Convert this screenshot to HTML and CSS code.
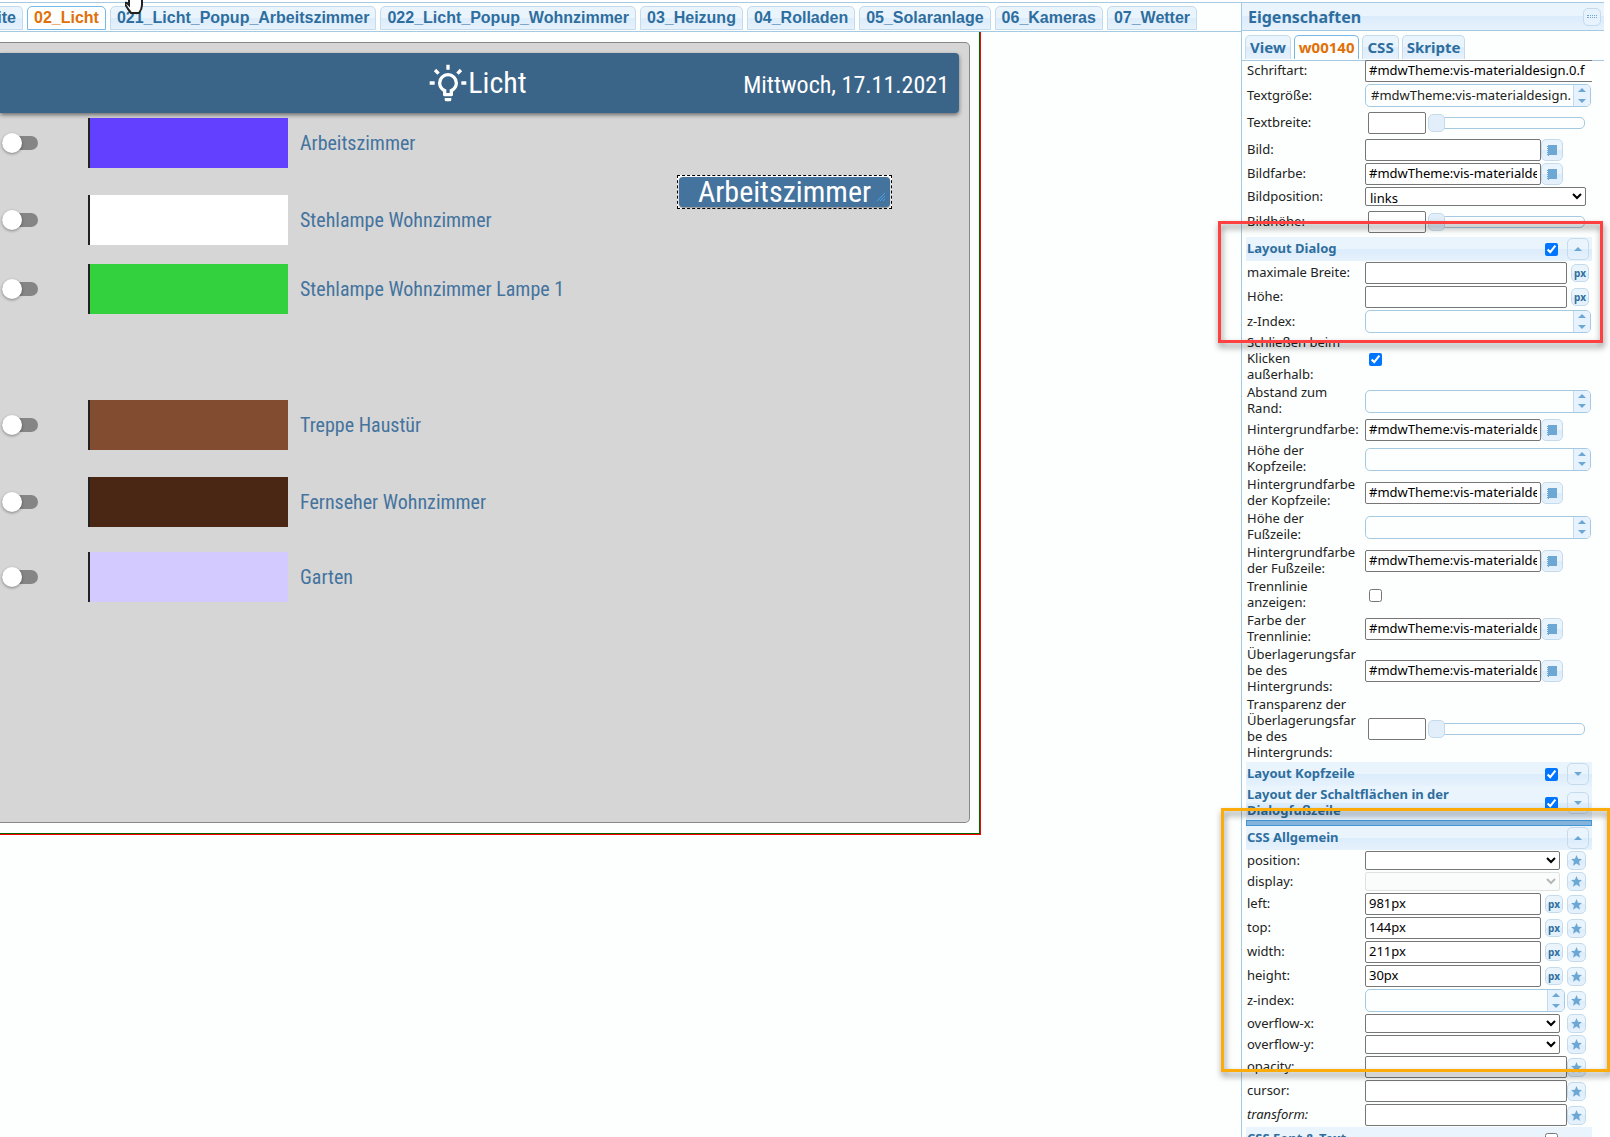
FILE: index.html
```html
<!DOCTYPE html>
<html lang="de">
<head>
<meta charset="utf-8">
<title>vis Editor</title>
<link rel="stylesheet" href="styles.css">
</head>
<body>
<svg class="defs" width="0" height="0" aria-hidden="true">
  <symbol id="up" viewBox="0 0 8 4"><path d="M0 4 4 0 8 4z"/></symbol>
  <symbol id="down" viewBox="0 0 8 4"><path d="M0 0H8L4 4z"/></symbol>
  <symbol id="book" viewBox="0 0 10 11"><path d="M2 0h8v10H2zM0 1h1v1H0zM0 3h1v1H0zM0 5h1v1H0zM0 7h1v1H0zM0 9h1v1H0zM1 0h1v11H1z"/></symbol>
  <symbol id="star" viewBox="0 0 12 12"><path d="M6 0 7.7 4 12 4.4 8.8 7.2 9.8 11.6 6 9.3 2.2 11.6 3.2 7.2 0 4.4 4.3 4z"/></symbol>
</svg>
<div class="app">
  <main class="editor">
    <nav class="views">
      <a href="#" class="view-tab cut">ite</a>
      <a href="#" class="view-tab active">02_Licht</a>
      <a href="#" class="view-tab">021_Licht_Popup_Arbeitszimmer</a>
      <a href="#" class="view-tab">022_Licht_Popup_Wohnzimmer</a>
      <a href="#" class="view-tab">03_Heizung</a>
      <a href="#" class="view-tab">04_Rolladen</a>
      <a href="#" class="view-tab">05_Solaranlage</a>
      <a href="#" class="view-tab">06_Kameras</a>
      <a href="#" class="view-tab">07_Wetter</a>
    </nav>
    <div class="canvas">
      <section class="card">
        <header class="title-bar">
          <h1 class="title"><svg class="bulb" viewBox="0 0 24 24"><path d="M20,11H23V13H20V11M1,11H4V13H1V11M13,1V4H11V1H13M4.92,3.5L7.05,5.64L5.63,7.05L3.5,4.93L4.92,3.5M16.95,5.63L19.07,3.5L20.5,4.93L18.37,7.05L16.95,5.63M12,6A6,6 0 0,1 18,12C18,14.22 16.79,16.16 15,17.2V19A1,1 0 0,1 14,20H10A1,1 0 0,1 9,19V17.2C7.21,16.16 6,14.22 6,12A6,6 0 0,1 12,6M14,21V22A1,1 0 0,1 13,23H11A1,1 0 0,1 10,22V21H14M11,18H13V15.87C14.73,15.43 16,13.86 16,12A4,4 0 0,0 12,8A4,4 0 0,0 8,12C8,13.86 9.27,15.43 11,15.87V18Z"/></svg>Licht</h1>
          <span class="date">Mittwoch, 17.11.2021</span>
        </header>
        <div class="lamps">
          <div class="lamp"><input type="checkbox" class="switch" id="l1"><span class="swatch violet"></span><label for="l1">Arbeitszimmer</label></div>
          <div class="lamp"><input type="checkbox" class="switch" id="l2"><span class="swatch white"></span><label for="l2">Stehlampe Wohnzimmer</label></div>
          <div class="lamp"><input type="checkbox" class="switch" id="l3"><span class="swatch green"></span><label for="l3">Stehlampe Wohnzimmer Lampe 1</label></div>
          <div class="lamp"><input type="checkbox" class="switch" id="l4"><span class="swatch brown"></span><label for="l4">Treppe Haustür</label></div>
          <div class="lamp"><input type="checkbox" class="switch" id="l5"><span class="swatch dark"></span><label for="l5">Fernseher Wohnzimmer</label></div>
          <div class="lamp"><input type="checkbox" class="switch" id="l6"><span class="swatch lilac"></span><label for="l6">Garten</label></div>
        </div>
      </section>
      <div class="selected">
        <button class="widget">Arbeitszimmer</button>
        <svg class="grip" viewBox="0 0 8 8"><path d="M0 8 8 0M3 8 8 3M6 8 8 6"/></svg>
      </div>
    </div>
    <svg class="pointer" viewBox="0 0 20 14"><path d="M4 -2V5L2 3Q0 2 0 4L3 9Q5 11 6 13H14Q17 9 17 5V-2z"/></svg>
  </main>

  <aside class="panel">
    <header class="panel-head"><h2>Eigenschaften</h2><button class="mini" aria-label="Minimieren"><span></span></button></header>
    <nav class="panel-tabs">
      <a href="#">View</a><a href="#" class="active">w00140</a><a href="#">CSS</a><a href="#">Skripte</a>
    </nav>
    <form class="props">
      <div class="row"><label for="p1">Schriftart:</label><input id="p1" class="text open" value="#mdwTheme:vis-materialdesign.0.f"></div>
      <div class="row"><label for="p2">Textgröße:</label><span class="spin"><input id="p2" value="#mdwTheme:vis-materialdesign."><span class="arrows"><svg><use href="#up"/></svg><svg><use href="#down"/></svg></span></span></div>
      <div class="row tall"><label for="p3">Textbreite:</label><input id="p3" class="text small"><input type="range" class="slider" value="0" aria-label="Textbreite"></div>
      <div class="row"><label for="p4">Bild:</label><input id="p4" class="text mid"><button type="button" class="btn" aria-label="Bild wählen"><svg class="book"><use href="#book"/></svg></button></div>
      <div class="row"><label for="p5">Bildfarbe:</label><input id="p5" class="text mid" value="#mdwTheme:vis-materialdesign"><button type="button" class="btn" aria-label="Farbe wählen"><svg class="book"><use href="#book"/></svg></button></div>
      <div class="row"><label for="p6">Bildposition:</label><select id="p6" class="wide"><option>links</option></select></div>
      <div class="row tall"><label for="p7">Bildhöhe:</label><input id="p7" class="text small"><input type="range" class="slider" value="0" aria-label="Bildhöhe"></div>
      <div class="group"><label for="g1">Layout Dialog</label><input type="checkbox" id="g1" checked><button type="button" class="btn" aria-label="Einklappen"><svg class="tri"><use href="#up"/></svg></button></div>
      <div class="row"><label for="p8">maximale Breite:</label><input id="p8" class="text long"><button type="button" class="px">px</button></div>
      <div class="row"><label for="p9">Höhe:</label><input id="p9" class="text long"><button type="button" class="px">px</button></div>
      <div class="row"><label for="p10">z-Index:</label><span class="spin"><input id="p10"><span class="arrows"><svg><use href="#up"/></svg><svg><use href="#down"/></svg></span></span></div>
      <div class="row"><label for="p11">Schließen beim<br>Klicken<br>außerhalb:</label><input type="checkbox" id="p11" class="tick" checked></div>
      <div class="row"><label for="p12">Abstand zum<br>Rand:</label><span class="spin"><input id="p12"><span class="arrows"><svg><use href="#up"/></svg><svg><use href="#down"/></svg></span></span></div>
      <div class="row"><label for="p13">Hintergrundfarbe:</label><input id="p13" class="text mid" value="#mdwTheme:vis-materialdesign"><button type="button" class="btn" aria-label="Farbe wählen"><svg class="book"><use href="#book"/></svg></button></div>
      <div class="row"><label for="p14">Höhe der<br>Kopfzeile:</label><span class="spin"><input id="p14"><span class="arrows"><svg><use href="#up"/></svg><svg><use href="#down"/></svg></span></span></div>
      <div class="row"><label for="p15">Hintergrundfarbe<br>der Kopfzeile:</label><input id="p15" class="text mid" value="#mdwTheme:vis-materialdesign"><button type="button" class="btn" aria-label="Farbe wählen"><svg class="book"><use href="#book"/></svg></button></div>
      <div class="row"><label for="p16">Höhe der<br>Fußzeile:</label><span class="spin"><input id="p16"><span class="arrows"><svg><use href="#up"/></svg><svg><use href="#down"/></svg></span></span></div>
      <div class="row"><label for="p17">Hintergrundfarbe<br>der Fußzeile:</label><input id="p17" class="text mid" value="#mdwTheme:vis-materialdesign"><button type="button" class="btn" aria-label="Farbe wählen"><svg class="book"><use href="#book"/></svg></button></div>
      <div class="row"><label for="p18">Trennlinie<br>anzeigen:</label><input type="checkbox" id="p18" class="tick"></div>
      <div class="row"><label for="p19">Farbe der<br>Trennlinie:</label><input id="p19" class="text mid" value="#mdwTheme:vis-materialdesign"><button type="button" class="btn" aria-label="Farbe wählen"><svg class="book"><use href="#book"/></svg></button></div>
      <div class="row"><label for="p20">Überlagerungsfar<br>be des<br>Hintergrunds:</label><input id="p20" class="text mid" value="#mdwTheme:vis-materialdesign"><button type="button" class="btn" aria-label="Farbe wählen"><svg class="book"><use href="#book"/></svg></button></div>
      <div class="row"><label for="p21">Transparenz der<br>Überlagerungsfar<br>be des<br>Hintergrunds:</label><input id="p21" class="text small"><input type="range" class="slider" value="0" aria-label="Transparenz"></div>
      <div class="group"><label for="g2">Layout Kopfzeile</label><input type="checkbox" id="g2" checked><button type="button" class="btn" aria-label="Ausklappen"><svg class="tri"><use href="#down"/></svg></button></div>
      <div class="group"><label for="g3">Layout der Schaltflächen in der<br>Dialogfußzeile</label><input type="checkbox" id="g3" checked><button type="button" class="btn" aria-label="Ausklappen"><svg class="tri"><use href="#down"/></svg></button></div>
      <div class="divider"></div>
      <div class="group"><span class="name">CSS Allgemein</span><button type="button" class="btn" aria-label="Einklappen"><svg class="tri"><use href="#up"/></svg></button></div>
      <div class="row"><label for="c1">position:</label><select id="c1"><option></option></select><button type="button" class="fav" aria-label="Favorit"><svg class="star"><use href="#star"/></svg></button></div>
      <div class="row"><label for="c2">display:</label><select id="c2" disabled><option></option></select><button type="button" class="fav" aria-label="Favorit"><svg class="star"><use href="#star"/></svg></button></div>
      <div class="row"><label for="c3">left:</label><input id="c3" class="text mid" value="981px"><button type="button" class="px">px</button><button type="button" class="fav" aria-label="Favorit"><svg class="star"><use href="#star"/></svg></button></div>
      <div class="row"><label for="c4">top:</label><input id="c4" class="text mid" value="144px"><button type="button" class="px">px</button><button type="button" class="fav" aria-label="Favorit"><svg class="star"><use href="#star"/></svg></button></div>
      <div class="row"><label for="c5">width:</label><input id="c5" class="text mid" value="211px"><button type="button" class="px">px</button><button type="button" class="fav" aria-label="Favorit"><svg class="star"><use href="#star"/></svg></button></div>
      <div class="row"><label for="c6">height:</label><input id="c6" class="text mid" value="30px"><button type="button" class="px">px</button><button type="button" class="fav" aria-label="Favorit"><svg class="star"><use href="#star"/></svg></button></div>
      <div class="row"><label for="c7">z-index:</label><span class="spin short"><input id="c7"><span class="arrows"><svg><use href="#up"/></svg><svg><use href="#down"/></svg></span></span><button type="button" class="fav" aria-label="Favorit"><svg class="star"><use href="#star"/></svg></button></div>
      <div class="row"><label for="c8">overflow-x:</label><select id="c8"><option></option></select><button type="button" class="fav" aria-label="Favorit"><svg class="star"><use href="#star"/></svg></button></div>
      <div class="row"><label for="c9">overflow-y:</label><select id="c9"><option></option></select><button type="button" class="fav" aria-label="Favorit"><svg class="star"><use href="#star"/></svg></button></div>
      <div class="row"><label for="c10">opacity:</label><input id="c10" class="text long"><button type="button" class="fav" aria-label="Favorit"><svg class="star"><use href="#star"/></svg></button></div>
      <div class="row"><label for="c11">cursor:</label><input id="c11" class="text long"><button type="button" class="fav" aria-label="Favorit"><svg class="star"><use href="#star"/></svg></button></div>
      <div class="row"><label for="c12"><em>transform:</em></label><input id="c12" class="text long"><button type="button" class="fav" aria-label="Favorit"><svg class="star"><use href="#star"/></svg></button></div>
      <div class="group"><label for="g4">CSS Font &amp; Text</label><input type="checkbox" id="g4"><span class="blank"></span></div>
    </form>
    <div class="mark red"></div>
    <div class="mark orange"></div>
  </aside>
</div>
</body>
</html>
```

FILE: styles.css
```css
* { box-sizing: border-box; }

body {
  margin: 0;
  background: #fff;
  font: 13px/16px "Lucida Grande", "Lucida Sans", "Noto Sans", sans-serif;
  color: #222;
}

a { text-decoration: none; color: inherit; }
h1, h2 { margin: 0; font-weight: 400; }
button, input, select { margin: 0; font: inherit; }
svg { display: block; fill: #6da8d5; }
.defs { position: absolute; }

.app {
  display: flex;
  height: 100vh;
  padding-top: 2px;
  overflow: hidden;
}

/* Editor */
.editor {
  flex: 1;
  min-width: 0;
  position: relative;
  display: flex;
  flex-direction: column;
  background: #fcfffe;
  border-top: 1px solid #a6c9e2;
}

.views {
  display: flex;
  gap: 4px;
  height: 29px;
  padding-top: 3px;
  background: #fcfffe;
  border-bottom: 1px solid #a6c9e2;
  overflow: hidden;
}

.view-tab {
  height: 24px;
  padding: 0 6px;
  border: 1px solid #c5dbec;
  border-radius: 5px 5px 0 0;
  background: linear-gradient(#eaf4fd 50%, #dcecfb 50%, #e6f2fd);
  color: #2e6e9e;
  font: bold 16px/21px "Liberation Sans", Arial, sans-serif;
  white-space: nowrap;
}
.view-tab.cut {
  display: flex;
  justify-content: flex-end;
  width: 23px;
  padding-left: 0;
  border-left: 0;
  border-top-left-radius: 0;
}
.view-tab.active { background: #fcfffe; border-color: #79b7e7; color: #e17009; }

.canvas {
  position: relative;
  width: min(981px, 100%);
  height: 803px;
  padding: 10px 10px 10px 0;
  border: 1px solid #f00;
  border-width: 0 1px 1px 0;
  box-shadow: inset -1px -1px #006400;
  font-family: "Roboto Condensed", "Liberation Sans Narrow", Roboto, sans-serif;
}

.card {
  height: 781px;
  padding: 10px 10px 0 0;
  background: #d6d6d6;
  border: 1px solid #888;
  border-left: 0;
  border-radius: 0 5px 5px 0;
}

.title-bar {
  display: grid;
  grid-template-columns: 1fr auto 1fr;
  align-items: center;
  height: 60px;
  padding: 0 10px 0 6px;
  background: #3b6588;
  border-radius: 0 4px 4px 0;
  box-shadow: 0 2px 4px rgba(0, 0, 0, .5);
  color: #fff;
}
.title { grid-column: 2; display: flex; align-items: center; font-size: 30px; line-height: 32px; }
.bulb { width: 40px; height: 40px; fill: #fff; }
.date { justify-self: end; padding-top: 4px; font-size: 24px; line-height: 32px; }

.lamps {
  display: grid;
  grid-template-rows: 77px 69px 136px 77px 75px 50px;
  margin-top: 5px;
}
.lamp {
  display: flex;
  align-items: center;
  height: 50px;
  padding-left: 2px;
  color: #44739e;
  font-size: 20px;
  line-height: 24px;
}
.switch {
  appearance: none;
  position: relative;
  width: 36px;
  height: 14px;
  border-radius: 7px;
  background: #858585;
}
.switch::before {
  content: "";
  position: absolute;
  left: 0;
  top: -3px;
  width: 20px;
  height: 20px;
  border-radius: 50%;
  background: #fff;
  box-shadow: 0 1px 3px rgba(0, 0, 0, .4);
}
.swatch { width: 200px; height: 50px; margin: 0 12px 0 50px; border-left: 2px solid #222; }
.violet { background: #633fff; }
.white { background: #fff; }
.green { background: #34d13e; }
.brown { background: #824c31; }
.dark { background: #4a2614; }
.lilac { background: #d3caff; }

.selected {
  position: absolute;
  left: 677px;
  top: 143px;
  width: 215px;
  height: 34px;
  padding: 1px;
  border: 1px dashed #000;
  background: #fff;
}
.widget {
  display: block;
  width: 100%;
  height: 30px;
  padding: 0;
  border: 0;
  border-radius: 4px;
  background: #44739e;
  box-shadow: 0 1px 2px rgba(0, 0, 0, .5);
  color: #fff;
  font-size: 30px;
  line-height: 28px;
}
.grip { position: absolute; right: 6px; bottom: 7px; width: 8px; height: 8px; stroke: #4a9fe6; fill: none; }
.pointer { position: absolute; left: 125px; top: -3px; width: 20px; height: 14px; fill: #fff; stroke: #222; stroke-width: 2px; }

/* Property panel */
.panel {
  position: relative;
  width: 369px;
  display: flex;
  flex-direction: column;
  border-right: 6px solid #fff;
  background: #fcfffe;
}
.panel::before {
  content: "";
  position: absolute;
  inset: 0 auto 0 0;
  width: 1px;
  background: #a6c9e2;
}
.panel-head {
  display: flex;
  align-items: center;
  justify-content: space-between;
  height: 29px;
  padding: 0 3px 0 6px;
  border: 1px solid #a6c9e2;
  border-right: 0;
  background: linear-gradient(#eaf4fd 50%, #dcecfb 50%, #e6f2fd);
}
.panel-head h2 { font-size: 16px; line-height: 20px; font-weight: 700; color: #2e6e9e; }
.mini {
  display: grid;
  place-items: center;
  width: 18px;
  height: 18px;
  padding: 0;
  border: 1px solid #c5dbec;
  border-radius: 5px;
  background: #e6f2fd;
}
.mini span { width: 10px; height: 3px; border: 1px dotted #6da8d5; border-width: 1px 0; }

.panel-tabs {
  display: flex;
  gap: 3px;
  height: 30px;
  padding: 4px 4px 0;
  border-bottom: 1px solid #a6c9e2;
}
.panel-tabs a {
  height: 24px;
  padding: 0 4px;
  border: 1px solid #c5dbec;
  border-bottom: 0;
  border-radius: 5px 5px 0 0;
  background: linear-gradient(#eaf4fd 50%, #dcecfb 50%, #e6f2fd);
  color: #2e6e9e;
  font-size: 15px;
  line-height: 22px;
  font-weight: 700;
}
.panel-tabs .active { background: #fcfffe; border-color: #79b7e7; color: #e17009; }

.props {
  flex: 1;
  min-height: 0;
  display: flex;
  flex-direction: column;
  gap: 2px;
  margin-top: -1px;
  padding: 0 12px 0 5px;
  overflow: hidden;
}
.row, .group { display: flex; align-items: center; flex: none; }
.row > label { width: 119px; margin: -1px 0 1px; padding-left: 1px; white-space: nowrap; }
.row.tall { height: 28px; }

.text {
  height: 22px;
  padding: 0 3px 2px;
  border: 1px solid #767676;
  border-radius: 2px;
  background: #fff;
  color: #000;
}
.open { width: 227px; border-right: 0; border-radius: 2px 0 0 2px; }
.long { width: 202px; }
.mid { width: 176px; }
.small { width: 58px; margin-left: 3px; }

.spin {
  display: flex;
  width: 226px;
  height: 23px;
  border: 1px solid #a6c9e2;
  border-radius: 5px;
  background: #fcfffe;
  overflow: hidden;
}
.spin.short { width: 200px; }
.spin input { flex: 1; min-width: 0; padding: 0 0 2px 5px; border: 0; background: none; color: #222; }
.arrows {
  display: flex;
  flex-direction: column;
  align-items: center;
  justify-content: space-around;
  width: 17px;
  border-left: 1px solid #c5dbec;
  background: #e6f2fd;
}
.arrows svg, .tri { width: 8px; height: 4px; }

.slider {
  appearance: none;
  width: 157px;
  height: 18px;
  margin-left: 2px;
  background: none;
}
.slider::-webkit-slider-runnable-track { height: 12px; border: 1px solid #a6c9e2; border-radius: 5px; background: #fcfffe; }
.slider::-webkit-slider-thumb {
  appearance: none;
  width: 17px;
  height: 18px;
  margin: -4px 0 0 -1px;
  border: 1px solid #c5dbec;
  border-radius: 5px;
  background: #e2effb;
}

select {
  width: 195px;
  height: 19px;
  border: 1px solid #767676;
  border-radius: 2px;
  background: #fff;
  color: #000;
  line-height: 15px;
}
select.wide { width: 221px; padding-bottom: 2px; }
select:disabled { border-color: #d5d5d5; background: #f9fbfa; color: #999; }

.btn, .fav, .px {
  display: grid;
  place-items: center;
  flex: none;
  padding: 0;
  border: 1px solid #c5dbec;
  border-radius: 5px;
  background: linear-gradient(#eaf4fd 50%, #dcecfb 50%, #e6f2fd);
}
.btn { width: 22px; height: 22px; }
.px { width: 18px; height: 18px; margin-left: 4px; color: #2e6e9e; font-size: 10px; line-height: 12px; font-weight: 700; }
.fav { width: 19px; height: 19px; margin: 0 6px 0 auto; }
.book { width: 10px; height: 11px; }
.star { width: 11px; height: 11px; }

.tick { width: 13px; height: 13px; margin-left: 4px; }

.group {
  min-height: 24px;
  margin: -1px 0;
  padding: 1px 3px 1px 1px;
  background: linear-gradient(#eaf4fd 50%, #dcecfb 50%, #e6f2fd);
  color: #2e6e9e;
  font-weight: 700;
}
.group label, .name { flex: 1; margin: -1px 0 1px; }
.group input { width: 13px; height: 13px; margin-right: 9px; }
.blank { width: 22px; height: 22px; }

.divider {
  flex: none;
  height: 6px;
  margin: -1px 0;
  border: 1px solid #4297d7;
  background: #84b4dc;
}

/* Annotation frames over the panel */
.mark { position: absolute; border: 3px solid; filter: drop-shadow(1px 4px 3px rgba(0, 0, 0, .5)); pointer-events: none; }
.red { left: -23px; top: 219px; width: 385px; height: 122px; border-color: #ff4040; }
.orange { left: -20px; top: 806px; width: 389px; height: 264px; border-color: #fbab0a; }
```
